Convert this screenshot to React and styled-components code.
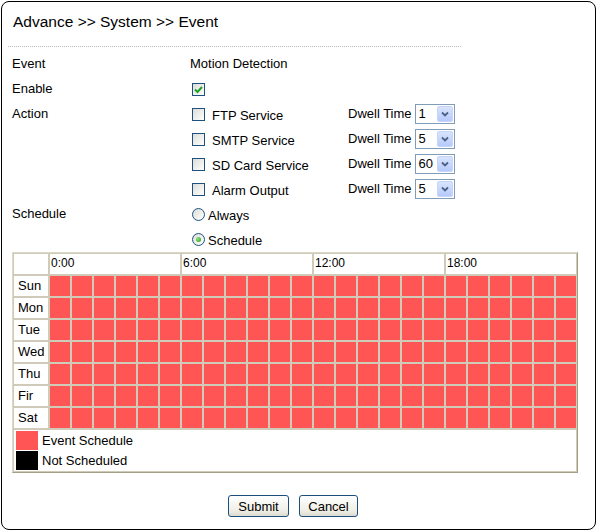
import styled, { createGlobalStyle } from "styled-components";

const GlobalStyle = createGlobalStyle`
  body {
    margin: 0;
    background: #fff;
    font-family: "Liberation Sans", Arial, sans-serif;
    color: #000;
  }
`;

const Frame = styled.div`
  box-sizing: border-box;
  margin: 1px;
  width: 595px;
  height: 529px;
  border: 1px solid #000;
  border-radius: 8px;
  padding: 0 0 0 10px;
`;

const Title = styled.div`
  height: 44px;
  box-sizing: border-box;
  padding: 11px 0 0 1px;
  font-size: 15.5px;
  line-height: 18px;
`;

const Divider = styled.div`
  width: 453px;
  margin-left: -4px;
  border-top: 1px dotted #bdbdbd;
`;

const Form = styled.div`
  margin-top: 4px;
  display: grid;
  grid-template-columns: 178px 1fr;
  grid-auto-rows: 25px;
  font-size: 13px;
  line-height: 25px;
`;

const Label = styled.div`
  grid-row: span ${(p) => p.$span || 1};
`;

const Cell = styled.div`
  display: flex;
  align-items: center;
  height: 25px;
`;

const Stack = styled.div`
  grid-row: span ${(p) => p.$span || 1};
  display: flex;
  flex-direction: column;
`;

const Check = styled.span`
  box-sizing: border-box;
  width: 13px;
  height: 13px;
  margin: 1px 0 0 2px;
  border: 1px solid #1c5180;
  background: linear-gradient(135deg, #dcdcd7, #ffffff);
  display: inline-flex;
  align-items: center;
  justify-content: center;
  flex-shrink: 0;
`;

const CheckText = styled.span`
  margin-left: 7px;
  padding-top: 4px;
  width: 136px;
  line-height: 21px;
`;

const Radio = styled.span`
  box-sizing: border-box;
  width: 13px;
  height: 13px;
  margin: 1px 0 0 2px;
  border: 1px solid #1c5180;
  border-radius: 50%;
  background: linear-gradient(135deg, #dcdcd7, #ffffff);
  display: inline-flex;
  align-items: center;
  justify-content: center;
  flex-shrink: 0;

  &::after {
    content: "";
    display: ${(p) => (p.$on ? "block" : "none")};
    width: 5px;
    height: 5px;
    border-radius: 50%;
    background: radial-gradient(circle at 35% 35%, #8ee07a, #21a121);
  }
`;

const RadioText = styled.span`
  margin-left: 3px;
  padding-top: 4px;
  line-height: 21px;
`;

const DwellText = styled.span`
  margin-right: 3px;
`;

const Select = styled.div`
  box-sizing: border-box;
  height: 20px;
  width: ${(p) => p.$w || 40}px;
  border: 1px solid #7f9db9;
  background: #fff;
  display: flex;
  align-items: center;
  padding: 1px;
  line-height: 16px;
`;

const SelectValue = styled.span`
  flex: 1;
  padding-left: 2px;
`;

const SelectBtn = styled.span`
  width: 16px;
  height: 16px;
  box-sizing: border-box;
  border-radius: 2px;
  background: linear-gradient(#d8e4fd, #b6cafb);
  border: 1px solid #c4d4fb;
  display: flex;
  align-items: center;
  justify-content: center;
`;

const Schedule = styled.div`
  margin-top: 1px;
  box-sizing: border-box;
  width: 566px;
  display: grid;
  grid-template-columns: 36px repeat(24, 22px);
  grid-template-rows: repeat(8, 22px) auto;
  border: 1px solid;
  border-color: #dcd8c8 #a39f8b #a39f8b #dcd8c8;
`;

const GridCell = styled.div`
  box-sizing: border-box;
  border: 1px solid #cfcbb8;
  background: ${(p) => (p.$on ? "#ff5555" : "#fff")};
  grid-column: span ${(p) => p.$span || 1};
`;

const HeadCell = styled(GridCell)`
  font-size: 12px;
  line-height: 18px;
  padding-left: 1px;
`;

const DayCell = styled(GridCell)`
  font-size: 13px;
  line-height: 19px;
  padding-left: 4px;
`;

const Legend = styled.div`
  grid-column: 1 / -1;
  box-sizing: border-box;
  border: 1px solid #cfcbb8;
  background: #fff;
  padding: 1px 0 0 2px;
  font-size: 13px;
`;

const LegendRow = styled.div`
  display: flex;
  align-items: center;
  height: 19px;
  margin-bottom: 1px;

  & + & {
    margin-top: 1px;
  }
`;

const Swatch = styled.span`
  width: 22px;
  height: 19px;
  background: ${(p) => p.$color};
  margin-right: 4px;
`;

const Buttons = styled.div`
  width: 566px;
  margin-top: 22px;
  display: flex;
  justify-content: center;
  gap: 10px;
  padding-right: 4px;
  box-sizing: border-box;
`;

const Button = styled.button`
  box-sizing: border-box;
  height: 22px;
  width: ${(p) => p.$w}px;
  padding: 0;
  border: 1px solid #1c4f7e;
  border-radius: 3px;
  background: linear-gradient(#ffffff, #f0efe7 70%, #dedcd0);
  font-family: "Liberation Sans", Arial, sans-serif;
  font-size: 13px;
  color: #000;
`;

const Tick = () => (
  <svg width="9" height="9" viewBox="0 0 9 9">
    <path d="M1 4.5 L3.5 7 L8 2" fill="none" stroke="#21a121" strokeWidth="2" />
  </svg>
);

const Chevron = () => (
  <svg width="8" height="6" viewBox="0 0 8 6">
    <path d="M1 1.5 L4 4.5 L7 1.5" fill="none" stroke="#4d6185" strokeWidth="1.8" />
  </svg>
);

const actions = [
  { name: "FTP Service", dwell: "1" },
  { name: "SMTP Service", dwell: "5" },
  { name: "SD Card Service", dwell: "60" },
  { name: "Alarm Output", dwell: "5" },
];

const days = ["Sun", "Mon", "Tue", "Wed", "Thu", "Fir", "Sat"];
const hours = ["0:00", "6:00", "12:00", "18:00"];

export default function App() {
  return (
    <>
      <GlobalStyle />
      <Frame>
        <Title>Advance &gt;&gt; System &gt;&gt; Event</Title>
        <Divider />
        <Form>
          <Label>Event</Label>
          <Cell>Motion Detection</Cell>
          <Label>Enable</Label>
          <Cell>
            <Check>
              <Tick />
            </Check>
          </Cell>
          <Label $span={4}>Action</Label>
          <Stack $span={4}>
            {actions.map((a) => (
              <Cell key={a.name}>
                <Check />
                <CheckText>{a.name}</CheckText>
                <DwellText>Dwell Time</DwellText>
                <Select $w={40}>
                  <SelectValue>{a.dwell}</SelectValue>
                  <SelectBtn>
                    <Chevron />
                  </SelectBtn>
                </Select>
              </Cell>
            ))}
          </Stack>
          <Label $span={2}>Schedule</Label>
          <Stack $span={2}>
            <Cell>
              <Radio />
              <RadioText>Always</RadioText>
            </Cell>
            <Cell>
              <Radio $on />
              <RadioText>Schedule</RadioText>
            </Cell>
          </Stack>
        </Form>
        <Schedule>
          <HeadCell />
          {hours.map((h) => (
            <HeadCell key={h} $span={6}>
              {h}
            </HeadCell>
          ))}
          {days.flatMap((d) => [
            <DayCell key={d}>{d}</DayCell>,
            ...Array.from({ length: 24 }, (_, i) => <GridCell key={d + i} $on />),
          ])}
          <Legend>
            <LegendRow>
              <Swatch $color="#ff5555" />
              Event Schedule
            </LegendRow>
            <LegendRow>
              <Swatch $color="#000" />
              Not Scheduled
            </LegendRow>
          </Legend>
        </Schedule>
        <Buttons>
          <Button $w={61}>Submit</Button>
          <Button $w={59}>Cancel</Button>
        </Buttons>
      </Frame>
    </>
  );
}
